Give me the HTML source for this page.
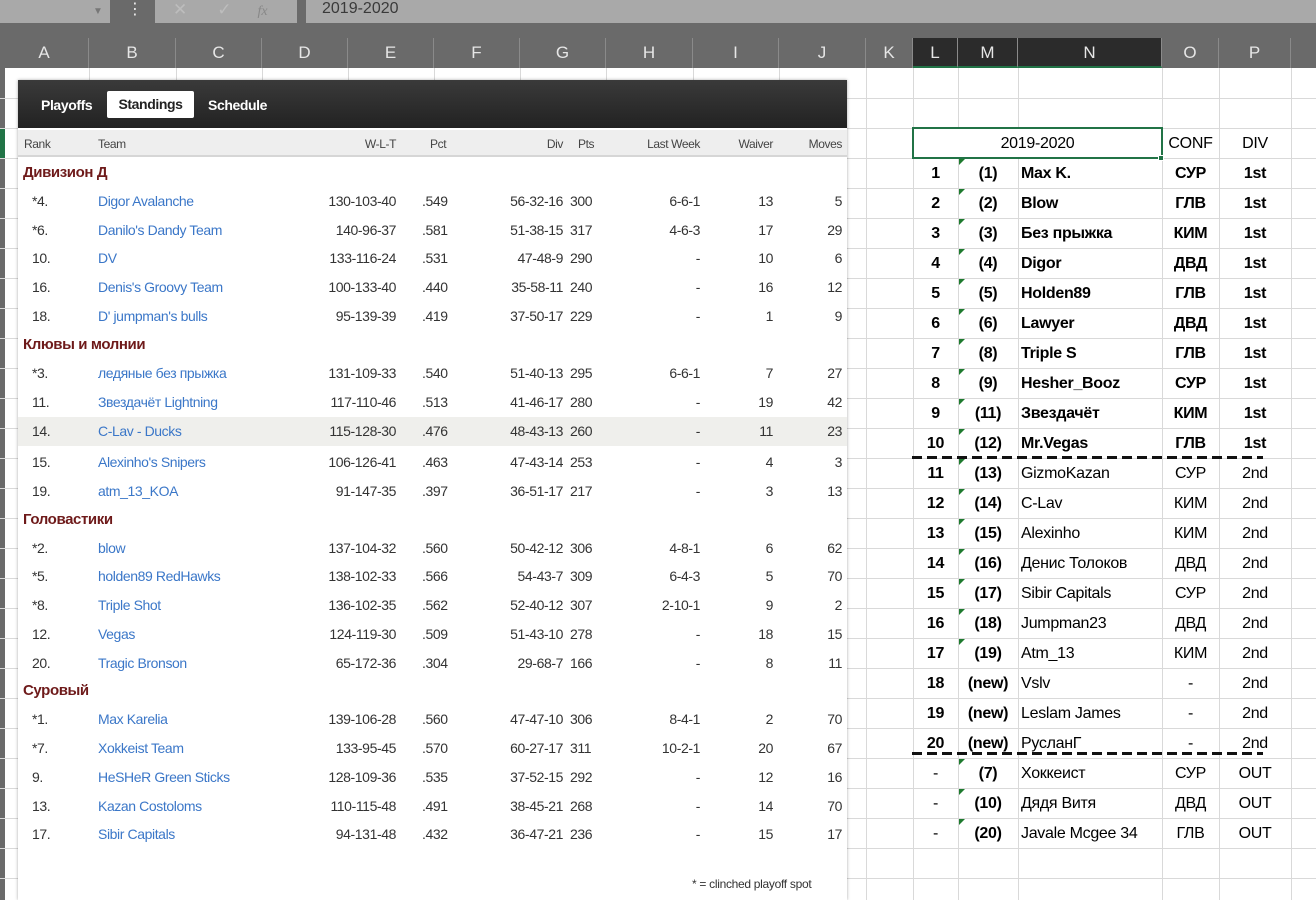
<!DOCTYPE html>
<html><head><meta charset="utf-8">
<style>
*{margin:0;padding:0;box-sizing:border-box}
body{width:1316px;height:900px;overflow:hidden;background:#fff;position:relative;font-family:"Liberation Sans","DejaVu Sans",sans-serif}
.abs{position:absolute}
#fbar{left:0;top:0;width:1316px;height:26px;background:#6a6a6a}
.ch{position:absolute;top:38px;height:30px;line-height:30px;text-align:center;color:#e6e6e6;font-size:17px;border-right:1px solid #8a8a8a}
.vl{position:absolute;top:68px;width:1px;height:832px;background:#d9d9d9}
.hl{position:absolute;left:0;width:1316px;height:1px;background:#d9d9d9}
#panel{left:18px;top:80px;width:829px;height:820px;background:#fff;box-shadow:0 0 3px rgba(0,0,0,.35);font-family:"Liberation Sans",sans-serif;font-size:14px;color:#333;letter-spacing:-0.4px}
.r{position:absolute;left:0;width:829px;height:29px;line-height:29px}
.r span{position:absolute;white-space:nowrap}
.a{left:14px}.b{left:80px;color:#3b77c8}.c{right:451px}.d{left:404px}.e{right:284px}.f{left:552px}.g{right:147px}.h{right:74px}.i{right:5px}
.grp{position:absolute;left:5px;font-weight:bold;color:#6e1a1a;font-size:15px}
.rt{position:absolute;height:30px;line-height:32px;font-family:"Liberation Sans","DejaVu Sans",sans-serif;font-size:16px;color:#000;white-space:nowrap;letter-spacing:-0.3px}
.L{left:913px;width:45px;text-align:center;font-weight:bold}
.M{left:958px;width:60px;text-align:center;font-weight:bold}
.N{left:1021px}
.O{left:1162px;width:57px;text-align:center}
.P{left:1219px;width:72px;text-align:center}
.bb{font-weight:bold}
.tri{position:absolute;left:959px;width:0;height:0;border-top:6px solid #1e7a2e;border-right:6px solid transparent}
.dash{position:absolute;left:912px;width:351px;height:3px;background:repeating-linear-gradient(90deg,#111 0 10px,transparent 10px 15px)}
</style></head><body>
<div id="fbar" class="abs"></div>
<div class="abs" style="left:0;top:0;width:110px;height:23px;background:#a9a9a9"></div>
<div class="abs" style="left:93px;top:6px;color:#777;font-size:10px">▼</div>
<div class="abs" style="left:120px;top:0;width:30px;height:26px;background:#6a6a6a;color:#eee;text-align:center;font-size:16px;line-height:20px">⋮</div>
<div class="abs" style="left:155px;top:0;width:142px;height:23px;background:#a9a9a9;color:#bdbdbd;font-size:17px;line-height:20px"><span style="margin-left:18px">✕</span><span style="margin-left:30px">✓</span><span style="margin-left:26px;font-style:italic;font-family:'Liberation Serif',serif;font-size:14px;color:#888">fx</span></div>
<div class="abs" style="left:306px;top:0;width:1010px;height:23px;background:#a9a9a9;color:#3a3a3a;font-size:16px;line-height:18px;padding-left:16px">2019-2020</div>
<div class="abs" style="left:0;top:26px;width:1316px;height:42px;background:#6a6a6a"></div>
<div class="ch" style="left:0;width:89px">A</div>
<div class="ch" style="left:89px;width:87px">B</div>
<div class="ch" style="left:176px;width:86px">C</div>
<div class="ch" style="left:262px;width:86px">D</div>
<div class="ch" style="left:348px;width:86px">E</div>
<div class="ch" style="left:434px;width:86px">F</div>
<div class="ch" style="left:520px;width:86px">G</div>
<div class="ch" style="left:606px;width:87px">H</div>
<div class="ch" style="left:693px;width:86px">I</div>
<div class="ch" style="left:779px;width:87px">J</div>
<div class="ch" style="left:866px;width:47px">K</div>
<div class="ch" style="left:913px;width:45px;background:#2b2b2b;border-bottom:2px solid #217346">L</div>
<div class="ch" style="left:958px;width:60px;background:#2b2b2b;border-bottom:2px solid #217346">M</div>
<div class="ch" style="left:1018px;width:144px;background:#2b2b2b;border-bottom:2px solid #217346">N</div>
<div class="ch" style="left:1162px;width:57px">O</div>
<div class="ch" style="left:1219px;width:72px">P</div>
<div class="ch" style="left:1291px;width:30px"></div>
<div class="abs" style="left:0;top:68px;width:5px;height:832px;background:#6a6a6a"></div>
<div class="abs" style="left:0;top:128px;width:5px;height:30px;background:#217346"></div>
<!-- grid -->
<div class="hl" style="top:98px"></div><div class="hl" style="top:128px"></div><div class="hl" style="top:158px"></div><div class="hl" style="top:188px"></div><div class="hl" style="top:218px"></div><div class="hl" style="top:248px"></div><div class="hl" style="top:278px"></div><div class="hl" style="top:308px"></div><div class="hl" style="top:338px"></div><div class="hl" style="top:368px"></div><div class="hl" style="top:398px"></div><div class="hl" style="top:428px"></div><div class="hl" style="top:458px"></div><div class="hl" style="top:488px"></div><div class="hl" style="top:518px"></div><div class="hl" style="top:548px"></div><div class="hl" style="top:578px"></div><div class="hl" style="top:608px"></div><div class="hl" style="top:638px"></div><div class="hl" style="top:668px"></div><div class="hl" style="top:698px"></div><div class="hl" style="top:728px"></div><div class="hl" style="top:758px"></div><div class="hl" style="top:788px"></div><div class="hl" style="top:818px"></div><div class="hl" style="top:848px"></div><div class="hl" style="top:878px"></div>
<div class="vl" style="left:89px"></div><div class="vl" style="left:176px"></div><div class="vl" style="left:262px"></div><div class="vl" style="left:348px"></div><div class="vl" style="left:434px"></div><div class="vl" style="left:520px"></div><div class="vl" style="left:606px"></div><div class="vl" style="left:693px"></div><div class="vl" style="left:779px"></div><div class="vl" style="left:866px"></div><div class="vl" style="left:913px"></div><div class="vl" style="left:958px"></div><div class="vl" style="left:1018px"></div><div class="vl" style="left:1162px"></div><div class="vl" style="left:1219px"></div><div class="vl" style="left:1291px"></div>

<div id="panel" class="abs">
<div class="abs" style="left:0;top:0;width:829px;height:48px;background:linear-gradient(#3a3a3a,#222)"></div>
<div class="abs" style="left:23px;top:17px;color:#fff;font-weight:bold;font-size:14px">Playoffs</div>
<div class="abs" style="left:89px;top:11px;width:87px;height:27px;background:#fff;border-radius:2px;color:#222;font-weight:bold;font-size:14px;line-height:27px;text-align:center">Standings</div>
<div class="abs" style="left:190px;top:17px;color:#fff;font-weight:bold;font-size:14px">Schedule</div>
<div class="abs" style="left:0;top:50px;width:829px;height:27px;background:#eeeeee;border-bottom:2px solid #d6d6d6"></div>
<div class="r" style="top:50px;height:27px;line-height:29px;font-size:12px;color:#444"><span style="left:6px">Rank</span><span style="left:80px">Team</span><span class="c">W-L-T</span><span style="left:412px">Pct</span><span class="e">Div</span><span style="left:560px">Pts</span><span class="g">Last Week</span><span class="h">Waiver</span><span class="i">Moves</span></div>

<div class="grp" style="top:84px">Дивизион Д</div>
<div class="r" style="top:107px"><span class="a">*4.</span><span class="b">Digor Avalanche</span><span class="c">130-103-40</span><span class="d">.549</span><span class="e">56-32-16</span><span class="f">300</span><span class="g">6-6-1</span><span class="h">13</span><span class="i">5</span></div>
<div class="r" style="top:136px"><span class="a">*6.</span><span class="b">Danilo's Dandy Team</span><span class="c">140-96-37</span><span class="d">.581</span><span class="e">51-38-15</span><span class="f">317</span><span class="g">4-6-3</span><span class="h">17</span><span class="i">29</span></div>
<div class="r" style="top:164px"><span class="a">10.</span><span class="b">DV</span><span class="c">133-116-24</span><span class="d">.531</span><span class="e">47-48-9</span><span class="f">290</span><span class="g">-</span><span class="h">10</span><span class="i">6</span></div>
<div class="r" style="top:193px"><span class="a">16.</span><span class="b">Denis's Groovy Team</span><span class="c">100-133-40</span><span class="d">.440</span><span class="e">35-58-11</span><span class="f">240</span><span class="g">-</span><span class="h">16</span><span class="i">12</span></div>
<div class="r" style="top:222px"><span class="a">18.</span><span class="b">D' jumpman's bulls</span><span class="c">95-139-39</span><span class="d">.419</span><span class="e">37-50-17</span><span class="f">229</span><span class="g">-</span><span class="h">1</span><span class="i">9</span></div>
<div class="grp" style="top:256px">Клювы и молнии</div>
<div class="r" style="top:279px"><span class="a">*3.</span><span class="b">ледяные без прыжка</span><span class="c">131-109-33</span><span class="d">.540</span><span class="e">51-40-13</span><span class="f">295</span><span class="g">6-6-1</span><span class="h">7</span><span class="i">27</span></div>
<div class="r" style="top:308px"><span class="a">11.</span><span class="b">Звездачёт Lightning</span><span class="c">117-110-46</span><span class="d">.513</span><span class="e">41-46-17</span><span class="f">280</span><span class="g">-</span><span class="h">19</span><span class="i">42</span></div>
<div class="r" style="top:337px;background:#efefec"><span class="a">14.</span><span class="b">C-Lav - Ducks</span><span class="c">115-128-30</span><span class="d">.476</span><span class="e">48-43-13</span><span class="f">260</span><span class="g">-</span><span class="h">11</span><span class="i">23</span></div>
<div class="r" style="top:368px"><span class="a">15.</span><span class="b">Alexinho's Snipers</span><span class="c">106-126-41</span><span class="d">.463</span><span class="e">47-43-14</span><span class="f">253</span><span class="g">-</span><span class="h">4</span><span class="i">3</span></div>
<div class="r" style="top:397px"><span class="a">19.</span><span class="b">atm_13_KOA</span><span class="c">91-147-35</span><span class="d">.397</span><span class="e">36-51-17</span><span class="f">217</span><span class="g">-</span><span class="h">3</span><span class="i">13</span></div>
<div class="grp" style="top:431px">Головастики</div>
<div class="r" style="top:454px"><span class="a">*2.</span><span class="b">blow</span><span class="c">137-104-32</span><span class="d">.560</span><span class="e">50-42-12</span><span class="f">306</span><span class="g">4-8-1</span><span class="h">6</span><span class="i">62</span></div>
<div class="r" style="top:482px"><span class="a">*5.</span><span class="b">holden89 RedHawks</span><span class="c">138-102-33</span><span class="d">.566</span><span class="e">54-43-7</span><span class="f">309</span><span class="g">6-4-3</span><span class="h">5</span><span class="i">70</span></div>
<div class="r" style="top:511px"><span class="a">*8.</span><span class="b">Triple Shot</span><span class="c">136-102-35</span><span class="d">.562</span><span class="e">52-40-12</span><span class="f">307</span><span class="g">2-10-1</span><span class="h">9</span><span class="i">2</span></div>
<div class="r" style="top:540px"><span class="a">12.</span><span class="b">Vegas</span><span class="c">124-119-30</span><span class="d">.509</span><span class="e">51-43-10</span><span class="f">278</span><span class="g">-</span><span class="h">18</span><span class="i">15</span></div>
<div class="r" style="top:569px"><span class="a">20.</span><span class="b">Tragic Bronson</span><span class="c">65-172-36</span><span class="d">.304</span><span class="e">29-68-7</span><span class="f">166</span><span class="g">-</span><span class="h">8</span><span class="i">11</span></div>
<div class="grp" style="top:602px">Суровый</div>
<div class="r" style="top:625px"><span class="a">*1.</span><span class="b">Max Karelia</span><span class="c">139-106-28</span><span class="d">.560</span><span class="e">47-47-10</span><span class="f">306</span><span class="g">8-4-1</span><span class="h">2</span><span class="i">70</span></div>
<div class="r" style="top:654px"><span class="a">*7.</span><span class="b">Xokkeist Team</span><span class="c">133-95-45</span><span class="d">.570</span><span class="e">60-27-17</span><span class="f">311</span><span class="g">10-2-1</span><span class="h">20</span><span class="i">67</span></div>
<div class="r" style="top:683px"><span class="a">9.</span><span class="b">HeSHeR Green Sticks</span><span class="c">128-109-36</span><span class="d">.535</span><span class="e">37-52-15</span><span class="f">292</span><span class="g">-</span><span class="h">12</span><span class="i">16</span></div>
<div class="r" style="top:712px"><span class="a">13.</span><span class="b">Kazan Costoloms</span><span class="c">110-115-48</span><span class="d">.491</span><span class="e">38-45-21</span><span class="f">268</span><span class="g">-</span><span class="h">14</span><span class="i">70</span></div>
<div class="r" style="top:740px"><span class="a">17.</span><span class="b">Sibir Capitals</span><span class="c">94-131-48</span><span class="d">.432</span><span class="e">36-47-21</span><span class="f">236</span><span class="g">-</span><span class="h">15</span><span class="i">17</span></div>
</div>
<div class="abs" style="left:692px;top:877px;font-size:12px;color:#333;letter-spacing:-0.3px;white-space:nowrap">* = clinched playoff spot</div>

<!-- right table -->
<div class="abs" style="left:912px;top:127px;width:251px;height:32px;border:2px solid #217346;background:#fff"></div>
<div class="abs" style="left:1158px;top:155px;width:6px;height:6px;background:#217346;border:1px solid #fff"></div>
<div class="rt" style="left:913px;width:249px;top:128px;text-align:center">2019-2020</div>
<div class="rt O" style="top:128px">CONF</div><div class="rt P" style="top:128px">DIV</div>

<div class="rt L" style="top:158px">1</div><div class="rt M" style="top:158px">(1)</div><div class="rt N bb" style="top:158px">Max K.</div><div class="rt O bb" style="top:158px">СУР</div><div class="rt P bb" style="top:158px">1st</div>
<div class="rt L" style="top:188px">2</div><div class="rt M" style="top:188px">(2)</div><div class="rt N bb" style="top:188px">Blow</div><div class="rt O bb" style="top:188px">ГЛВ</div><div class="rt P bb" style="top:188px">1st</div>
<div class="rt L" style="top:218px">3</div><div class="rt M" style="top:218px">(3)</div><div class="rt N bb" style="top:218px">Без прыжка</div><div class="rt O bb" style="top:218px">КИМ</div><div class="rt P bb" style="top:218px">1st</div>
<div class="rt L" style="top:248px">4</div><div class="rt M" style="top:248px">(4)</div><div class="rt N bb" style="top:248px">Digor</div><div class="rt O bb" style="top:248px">ДВД</div><div class="rt P bb" style="top:248px">1st</div>
<div class="rt L" style="top:278px">5</div><div class="rt M" style="top:278px">(5)</div><div class="rt N bb" style="top:278px">Holden89</div><div class="rt O bb" style="top:278px">ГЛВ</div><div class="rt P bb" style="top:278px">1st</div>
<div class="rt L" style="top:308px">6</div><div class="rt M" style="top:308px">(6)</div><div class="rt N bb" style="top:308px">Lawyer</div><div class="rt O bb" style="top:308px">ДВД</div><div class="rt P bb" style="top:308px">1st</div>
<div class="rt L" style="top:338px">7</div><div class="rt M" style="top:338px">(8)</div><div class="rt N bb" style="top:338px">Triple S</div><div class="rt O bb" style="top:338px">ГЛВ</div><div class="rt P bb" style="top:338px">1st</div>
<div class="rt L" style="top:368px">8</div><div class="rt M" style="top:368px">(9)</div><div class="rt N bb" style="top:368px">Hesher_Booz</div><div class="rt O bb" style="top:368px">СУР</div><div class="rt P bb" style="top:368px">1st</div>
<div class="rt L" style="top:398px">9</div><div class="rt M" style="top:398px">(11)</div><div class="rt N bb" style="top:398px">Звездачёт</div><div class="rt O bb" style="top:398px">КИМ</div><div class="rt P bb" style="top:398px">1st</div>
<div class="rt L" style="top:428px">10</div><div class="rt M" style="top:428px">(12)</div><div class="rt N bb" style="top:428px">Mr.Vegas</div><div class="rt O bb" style="top:428px">ГЛВ</div><div class="rt P bb" style="top:428px">1st</div>
<div class="rt L" style="top:458px">11</div><div class="rt M" style="top:458px">(13)</div><div class="rt N" style="top:458px">GizmoKazan</div><div class="rt O" style="top:458px">СУР</div><div class="rt P" style="top:458px">2nd</div>
<div class="rt L" style="top:488px">12</div><div class="rt M" style="top:488px">(14)</div><div class="rt N" style="top:488px">C-Lav</div><div class="rt O" style="top:488px">КИМ</div><div class="rt P" style="top:488px">2nd</div>
<div class="rt L" style="top:518px">13</div><div class="rt M" style="top:518px">(15)</div><div class="rt N" style="top:518px">Alexinho</div><div class="rt O" style="top:518px">КИМ</div><div class="rt P" style="top:518px">2nd</div>
<div class="rt L" style="top:548px">14</div><div class="rt M" style="top:548px">(16)</div><div class="rt N" style="top:548px">Денис Толоков</div><div class="rt O" style="top:548px">ДВД</div><div class="rt P" style="top:548px">2nd</div>
<div class="rt L" style="top:578px">15</div><div class="rt M" style="top:578px">(17)</div><div class="rt N" style="top:578px">Sibir Capitals</div><div class="rt O" style="top:578px">СУР</div><div class="rt P" style="top:578px">2nd</div>
<div class="rt L" style="top:608px">16</div><div class="rt M" style="top:608px">(18)</div><div class="rt N" style="top:608px">Jumpman23</div><div class="rt O" style="top:608px">ДВД</div><div class="rt P" style="top:608px">2nd</div>
<div class="rt L" style="top:638px">17</div><div class="rt M" style="top:638px">(19)</div><div class="rt N" style="top:638px">Atm_13</div><div class="rt O" style="top:638px">КИМ</div><div class="rt P" style="top:638px">2nd</div>
<div class="rt L" style="top:668px">18</div><div class="rt M" style="top:668px">(new)</div><div class="rt N" style="top:668px">Vslv</div><div class="rt O" style="top:668px">-</div><div class="rt P" style="top:668px">2nd</div>
<div class="rt L" style="top:698px">19</div><div class="rt M" style="top:698px">(new)</div><div class="rt N" style="top:698px">Leslam James</div><div class="rt O" style="top:698px">-</div><div class="rt P" style="top:698px">2nd</div>
<div class="rt L" style="top:728px">20</div><div class="rt M" style="top:728px">(new)</div><div class="rt N" style="top:728px">РусланГ</div><div class="rt O" style="top:728px">-</div><div class="rt P" style="top:728px">2nd</div>
<div class="rt L" style="top:758px;font-weight:normal">-</div><div class="rt M" style="top:758px">(7)</div><div class="rt N" style="top:758px">Хоккеист</div><div class="rt O" style="top:758px">СУР</div><div class="rt P" style="top:758px">OUT</div>
<div class="rt L" style="top:788px;font-weight:normal">-</div><div class="rt M" style="top:788px">(10)</div><div class="rt N" style="top:788px">Дядя Витя</div><div class="rt O" style="top:788px">ДВД</div><div class="rt P" style="top:788px">OUT</div>
<div class="rt L" style="top:818px;font-weight:normal">-</div><div class="rt M" style="top:818px">(20)</div><div class="rt N" style="top:818px">Javale Mcgee 34</div><div class="rt O" style="top:818px">ГЛВ</div><div class="rt P" style="top:818px">OUT</div>

<div class="tri" style="top:159px"></div><div class="tri" style="top:189px"></div><div class="tri" style="top:219px"></div><div class="tri" style="top:249px"></div><div class="tri" style="top:279px"></div><div class="tri" style="top:309px"></div><div class="tri" style="top:339px"></div><div class="tri" style="top:369px"></div><div class="tri" style="top:399px"></div><div class="tri" style="top:429px"></div><div class="tri" style="top:459px"></div><div class="tri" style="top:489px"></div><div class="tri" style="top:519px"></div><div class="tri" style="top:549px"></div><div class="tri" style="top:579px"></div><div class="tri" style="top:609px"></div><div class="tri" style="top:639px"></div><div class="tri" style="top:759px"></div><div class="tri" style="top:789px"></div><div class="tri" style="top:819px"></div>

<div class="dash" style="top:456px"></div>
<div class="dash" style="top:752px"></div>
</body></html>
